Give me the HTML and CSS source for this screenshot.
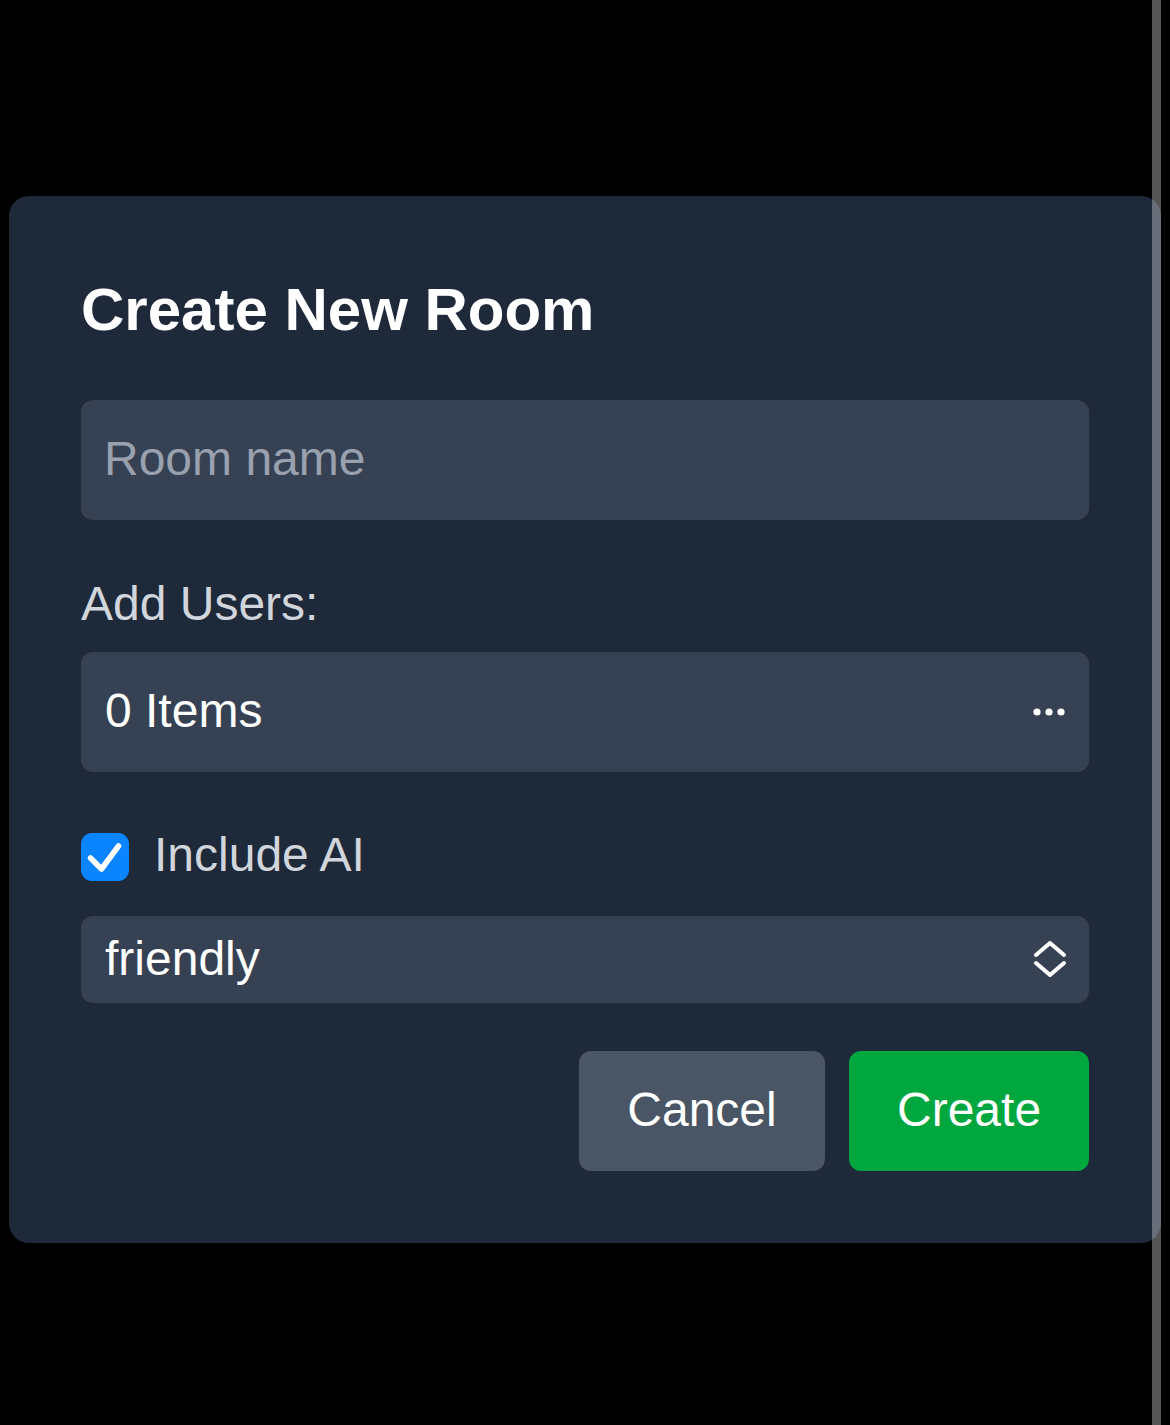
FILE: index.html
```html
<!DOCTYPE html>
<html lang="en">
<head>
<meta charset="utf-8">
<title>Create New Room</title>
<link rel="stylesheet" href="styles.css">
</head>
<body>
<div class="overlay">
  <div class="modal">
    <h2 class="title">Create New Room</h2>
    <input class="field text-input" type="text" placeholder="Room name">
    <div class="label">Add Users:</div>
    <div class="field items">
      <span class="val">0 Items</span>
      <svg class="dots" width="32" height="10" viewBox="0 0 32 10"><circle cx="4" cy="5" r="3.6" fill="#fff"/><circle cx="16" cy="5" r="3.6" fill="#fff"/><circle cx="28" cy="5" r="3.6" fill="#fff"/></svg>
    </div>
    <div class="check-row">
      <span class="checkbox">
        <svg width="48" height="48" viewBox="0 0 48 48"><path d="M9.5 25 L20.5 36 L37.5 13" fill="none" stroke="#fff" stroke-width="5.5" stroke-linecap="round" stroke-linejoin="round"/></svg>
      </span>
      <span class="check-label">Include AI</span>
    </div>
    <div class="field select">
      <span class="val">friendly</span>
      <svg class="chev" width="34" height="40" viewBox="0 0 34 40"><path d="M3 14 L17 2 L31 14 M3 22 L17 34 L31 22" fill="none" stroke="#fff" stroke-width="4" stroke-linecap="round" stroke-linejoin="round"/></svg>
    </div>
    <div class="actions">
      <button class="btn cancel">Cancel</button>
      <button class="btn create">Create</button>
    </div>
  </div>
</div>
<div class="scrollbar"></div>
</body>
</html>
```
FILE: styles.css
```css
html, body {
  margin: 0;
  padding: 0;
  background: #000;
  height: 100%;
}
body {
  font-family: "Liberation Sans", Arial, Helvetica, sans-serif;
  overflow: hidden;
}
.overlay {
  padding: 196px 0 0 9px;
}
.modal {
  width: 1152px;
  box-sizing: border-box;
  background: #1e2939;
  border-radius: 20px;
  padding: 72px;
  display: flex;
  flex-direction: column;
}
.title {
  margin: 0 0 48px;
  font-size: 60px;
  line-height: 84px;
  font-weight: bold;
  color: #fff;
}
.field {
  box-sizing: border-box;
  width: 100%;
  background: #364153;
  border: none;
  border-radius: 12px;
  font-family: inherit;
  font-size: 48px;
  color: #fff;
}
.text-input {
  height: 120px;
  padding: 0 24px 4px 23px;
  outline: none;
  display: block;
}
.text-input::placeholder {
  color: #99a1af;
}
.label {
  margin-top: 48px;
  margin-bottom: 12px;
  font-size: 48px;
  line-height: 72px;
  color: #d1d5dc;
}
.items {
  height: 120px;
  padding: 0 24px 0 24px;
  display: flex;
  align-items: center;
  justify-content: space-between;
}
.val {
  margin-top: -3px;
}
.check-row {
  margin-top: 48px;
  margin-bottom: 24px;
  height: 72px;
  display: flex;
  align-items: center;
}
.checkbox {
  width: 48px;
  height: 48px;
  border-radius: 11px;
  background: #0a84ff;
  display: flex;
  margin-top: 1px;
}
.check-label {
  margin-left: 25px;
  margin-top: -3px;
  font-size: 48px;
  color: #d1d5dc;
}
.select {
  height: 87px;
  padding: 0 22px 0 24px;
  display: flex;
  align-items: center;
  justify-content: space-between;
}
.chev {
  margin-top: 2px;
}
.actions {
  margin-top: 48px;
  display: flex;
  justify-content: flex-end;
  gap: 24px;
}
.btn {
  height: 120px;
  padding: 0 48px 4px;
  border: none;
  border-radius: 12px;
  font-family: inherit;
  font-size: 48px;
  color: #fff;
}
.cancel {
  background: #4a5565;
  width: 246px;
}
.create {
  background: #00a63e;
  width: 240px;
}
.scrollbar {
  position: fixed;
  top: 0;
  left: 1152px;
  width: 9px;
  height: 100%;
  background: rgba(255, 255, 255, 0.33);
}
```
